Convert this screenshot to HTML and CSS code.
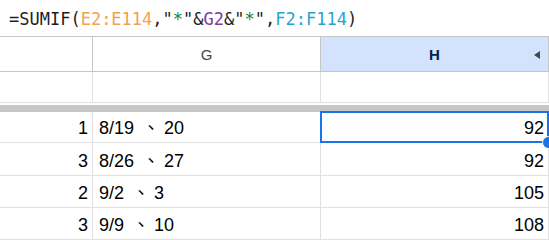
FILE: index.html
```html
<!DOCTYPE html>
<html lang="zh-Hant">
<head>
    <meta charset="UTF-8" />
    <meta name="viewport" content="width=device-width, initial-scale=1.0" />
    <title>Sheet</title>
    <link rel="stylesheet" href="styles.css">
</head>
<body>
    <div class="formula-bar">
        <span>=SUMIF(</span><span class="ref-e">E2:E114</span><span>,"</span><span class="star">*</span><span>"&amp;</span><span class="ref-g">G2</span><span>&amp;"</span><span class="star">*</span><span>",</span><span class="ref-f">F2:F114</span><span>)</span>
    </div>

    <div class="sheet">
        <div class="head"></div>
        <div class="head">G</div>
        <div class="head head-active">H<span class="menu-arrow"></span></div>

        <div class="cell"></div>
        <div class="cell"></div>
        <div class="cell"></div>

        <div class="freeze"></div>

        <div class="cell num">1</div>
        <div class="cell text">8/19<span class="sep">、</span>20</div>
        <div class="cell num selected">92<span class="handle"></span></div>

        <div class="cell num">3</div>
        <div class="cell text">8/26<span class="sep">、</span>27</div>
        <div class="cell num">92</div>

        <div class="cell num">2</div>
        <div class="cell text">9/2<span class="sep">、</span>3</div>
        <div class="cell num">105</div>

        <div class="cell num">3</div>
        <div class="cell text">9/9<span class="sep">、</span>10</div>
        <div class="cell num">108</div>
    </div>
</body>
</html>
```

FILE: styles.css
```css
body {
    margin: 0;
    background: #ffffff;
    font-family: "Liberation Sans", Arial, "Noto Sans CJK TC", sans-serif;
    color: #000000;
    overflow: hidden;
}

.formula-bar {
    height: 37px;
    border-bottom: 1px solid #c4c7c5;
    display: flex;
    align-items: center;
    padding-left: 9px;
    padding-top: 1px;
    box-sizing: border-box;
    font-family: "DejaVu Sans Mono", monospace;
    font-size: 17px;
    color: #1f1f1f;
    white-space: pre;
}

.ref-e { color: #f3a14e; }
.ref-g { color: #7e3a9c; }
.ref-f { color: #28a5cf; }
.star { color: #188038; }

.sheet {
    display: grid;
    grid-template-columns: 93px 228px 228px;
    grid-template-rows: 35px 31px 9px 31px 33px 32px 32px;
}

.head {
    border-right: 1px solid #c4c7c5;
    border-bottom: 1px solid #c4c7c5;
    display: flex;
    align-items: center;
    justify-content: center;
    font-size: 15px;
    color: #444746;
    position: relative;
}

.head-active {
    background: #d3e3fd;
    color: #041e49;
    font-weight: bold;
}

.menu-arrow {
    position: absolute;
    right: 8px;
    top: 14px;
    width: 0;
    height: 0;
    border-top: 4px solid transparent;
    border-bottom: 4px solid transparent;
    border-right: 6px solid #444746;
}

.cell {
    border-right: 1px solid #e1e1e1;
    border-bottom: 1px solid #e1e1e1;
    display: flex;
    align-items: flex-end;
    padding-bottom: 4px;
    box-sizing: border-box;
    font-size: 18px;
    line-height: 20px;
    position: relative;
}

.num {
    justify-content: flex-end;
    padding-right: 4px;
}

.text {
    padding-left: 6px;
}

.sep {
    padding-left: 8px;
    padding-right: 4px;
}

.freeze {
    grid-column: 1 / 4;
    border-top: 2px solid #ffffff;
    background: #c7c7c7;
    box-sizing: border-box;
}

.selected::after {
    content: "";
    position: absolute;
    left: -1px;
    top: -1px;
    right: -1px;
    bottom: -1px;
    border: 2px solid #1a73e8;
}

.handle {
    position: absolute;
    right: -7px;
    bottom: -7px;
    width: 11px;
    height: 11px;
    border-radius: 50%;
    background: #1a73e8;
    border: 1px solid #ffffff;
    z-index: 2;
}
```
